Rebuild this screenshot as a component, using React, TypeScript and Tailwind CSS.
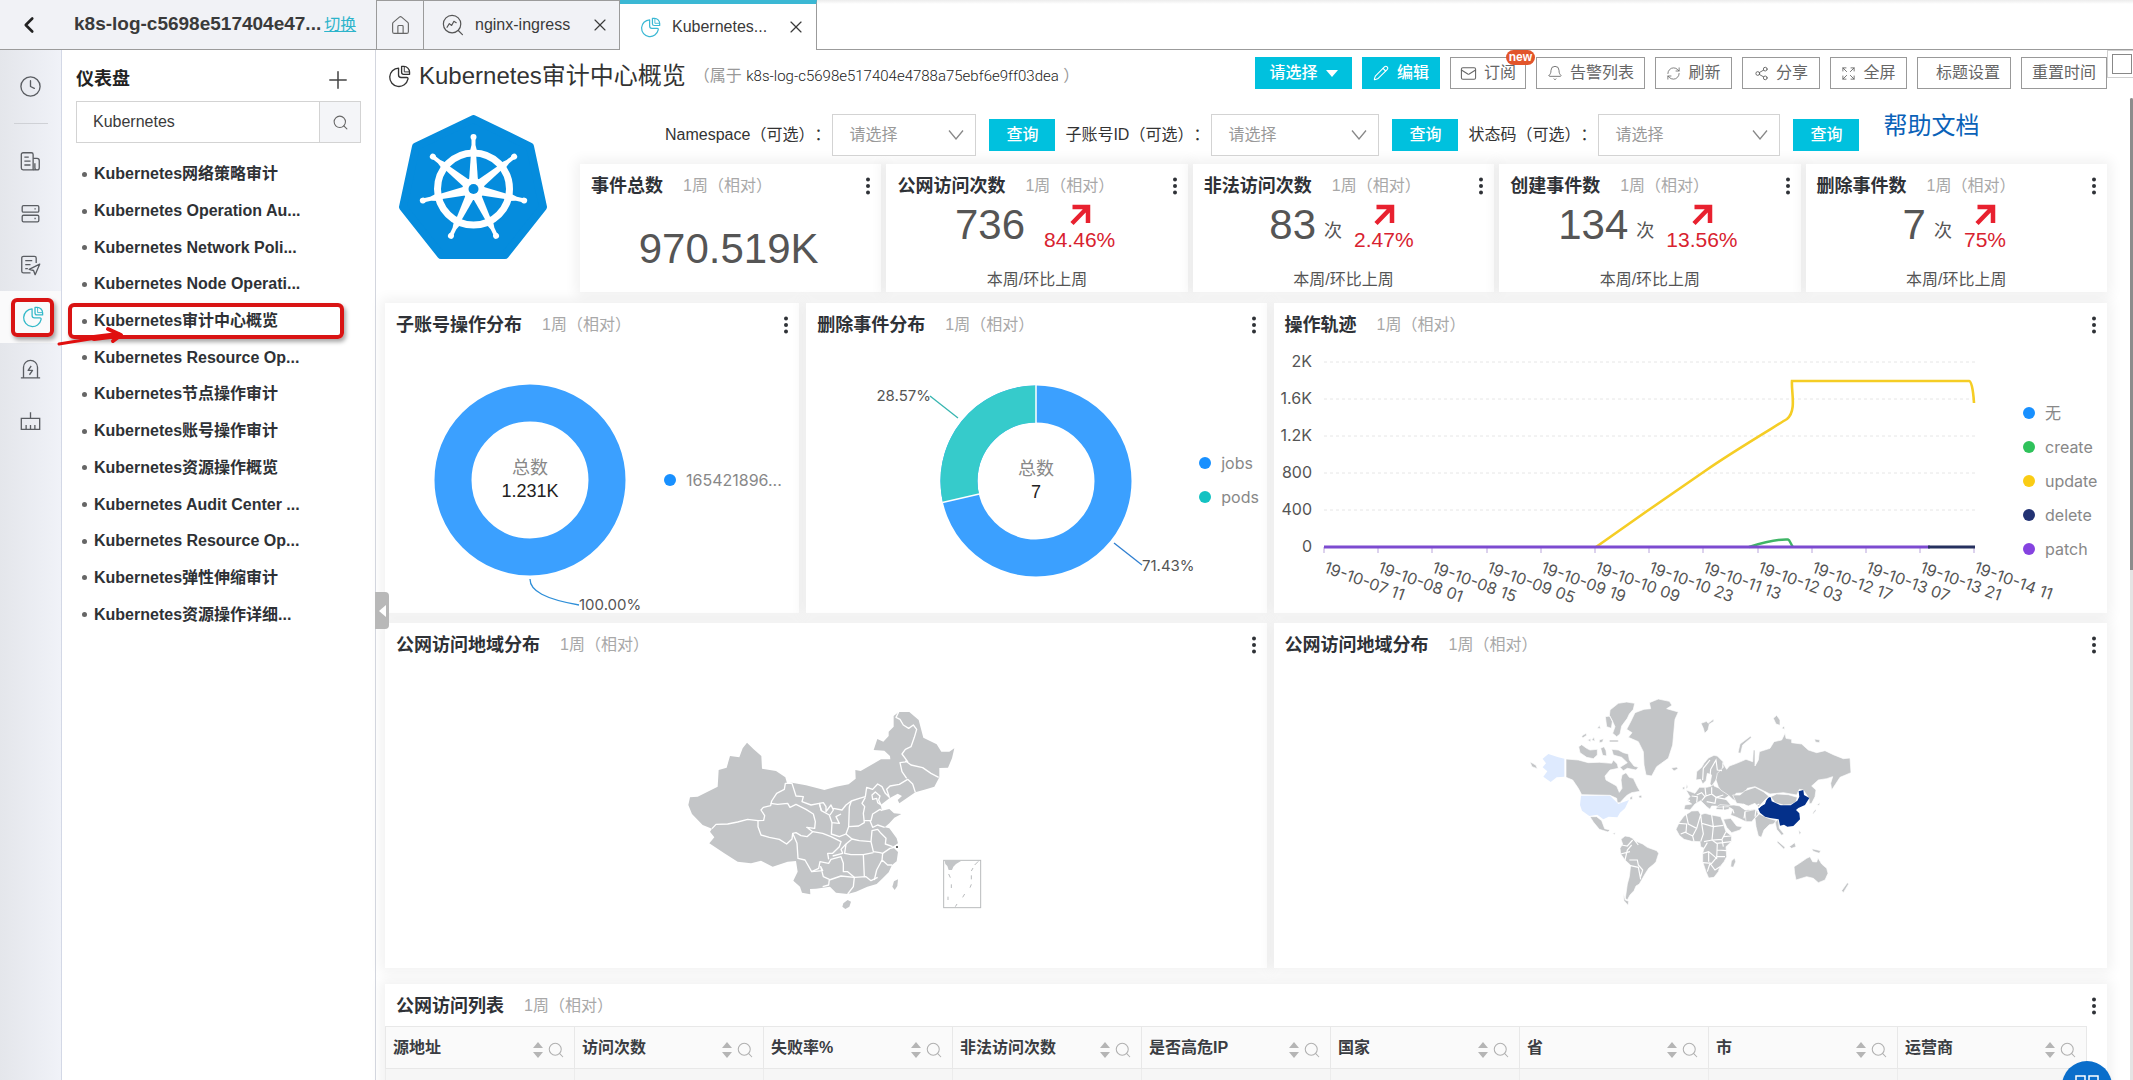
import React from "react";
import { House, Search, Plus, X, Mail, Pencil, Bell, RefreshCw, Share2, Expand, ChevronLeft, Clock } from "lucide-react";

const sans = "font-['Liberation_Sans','Noto_Sans_CJK_SC',sans-serif]";
const chartFont = "font-['Inter','Noto_Sans_CJK_SC',sans-serif]";

type IconProps = { className?: string };

function PieIcon({ className }: IconProps) {
  return (
    <svg viewBox="0 0 24 24" fill="none" stroke="currentColor" strokeWidth="1.4" strokeLinejoin="round" className={className}>
      <path d="M11 3.2a9.6 9.6 0 1 0 9.8 11.6c.3-1.300-.2-1.800-1.200-1.800h-6c-1.600 0-2.600-1-2.600-2.600z" />
      <path d="M14.200 1.500h2.300a6 6 0 0 1 6 6v2.200h-6.200a2.100 2.100 0 0 1-2.100-2.100z" />
      <path d="M17 1.600v5.600h5.400" strokeWidth="1" />
    </svg>
  );
}

function DocsIcon({ className }: IconProps) {
  return (
    <svg viewBox="0 0 24 24" fill="none" stroke="currentColor" strokeWidth="1.500" strokeLinejoin="round" className={className}>
      <path d="M3.500 2h9.500a2 2 0 0 1 2 2v17.500H3.500a2 2 0 0 1-2-2V4a2 2 0 0 1 2-2z" />
      <path d="M15 8.500h4.500a2.500 2.500 0 0 1 2.500 2.500v8a2.500 2.500 0 0 1-5 0v-5M15 21.500h4.500" />
      <path d="M5 7h5M5 11.500h7M5 16h7" />
    </svg>
  );
}

function ServerIcon({ className }: IconProps) {
  return (
    <svg viewBox="0 0 24 24" fill="none" stroke="currentColor" strokeWidth="1.500" className={className}>
      <rect x="2.500" y="3" width="19" height="7.500" rx="1.500" />
      <rect x="2.500" y="14" width="19" height="7.500" rx="1.500" />
      <path d="M16.500 6.700h1.500M16.500 17.700h1.500" />
    </svg>
  );
}

function NoteIcon({ className }: IconProps) {
  return (
    <svg viewBox="0 0 24 24" fill="none" stroke="currentColor" strokeWidth="1.500" strokeLinejoin="round" className={className}>
      <path d="M18.500 9V3.500a2 2 0 0 0-2-2H4a2 2 0 0 0-2 2v15a2 2 0 0 0 2 2h8" />
      <path d="M6 6.500h8M6 11h6M6 15.500h3" />
      <path d="M22.500 10.500l-12 6 5 1.200 1.800 4.800z" />
    </svg>
  );
}

function AlarmIcon({ className }: IconProps) {
  return (
    <svg viewBox="0 0 24 24" fill="none" stroke="currentColor" strokeWidth="1.500" strokeLinejoin="round" className={className}>
      <path d="M1 21.500h22M4 21.500V9.500a8 8 0 0 1 16 0v12" />
      <path d="M12.800 8l-3.500 5h5l-3.500 5" />
    </svg>
  );
}

function BroomIcon({ className }: IconProps) {
  return (
    <svg viewBox="0 0 24 24" fill="none" stroke="currentColor" strokeWidth="1.500" className={className}>
      <path d="M12 1.500v6.500M1.500 8.500h21v12.500h-21z" />
      <path d="M7 21v-5M12 21v-5M17 21v-5" />
    </svg>
  );
}

function TraceIcon({ className }: IconProps) {
  return (
    <svg viewBox="0 0 24 24" fill="none" stroke="currentColor" strokeWidth="1.300" strokeLinecap="round" strokeLinejoin="round" className={className}>
      <circle cx="11" cy="11" r="9.500" />
      <path d="M17.800 18l4.500 4.500M5.500 14.500l2.500-4 2.500 2 2.500-4.500 2.500 1.500" />
    </svg>
  );
}

function Dots({ label }: { label: string }) {
  return (
    <button type="button" aria-label={label} className="ml-auto flex h-6 w-4 items-center justify-center">
      <svg viewBox="0 0 4 18" className="h-[18px] w-1" fill="#2f3237">
        <circle cx="2" cy="2.500" r="2" />
        <circle cx="2" cy="9" r="2" />
        <circle cx="2" cy="15.500" r="2" />
      </svg>
    </button>
  );
}

function Card({ title, children, className = "" }: { title: string; children?: React.ReactNode; className?: string }) {
  return (
    <section className={`flex min-w-0 flex-col bg-white shadow-[0_0_12px_4px_rgba(0,0,0,0.06)] ${className}`}>
      <header className="flex h-10 shrink-0 items-center pt-1 pr-[5px] pl-[11px]">
        <h2 className="text-[18px] leading-6 font-bold whitespace-nowrap text-[#2f3237]">{title}</h2>
        <span className="ml-5 text-[16px] leading-6 whitespace-nowrap text-[#a8a8a8]">1周（相对）</span>
        <Dots label={`${title}菜单`} />
      </header>
      {children}
    </section>
  );
}

function KubernetesLogo() {
  const angles = [0, 1, 2, 3, 4, 5, 6].map((i) => (i * 360) / 7);
  return (
    <svg viewBox="0 0 148 144" className="ml-[14px] mt-[3px] h-[144px] w-[148px]" role="img" aria-label="Kubernetes">
      <path
        d="M74.500 4L131 31.500L144 92L106 140H42L4 92L17 31.500Z"
        fill="#058cdd"
        stroke="#058cdd"
        strokeWidth="8"
        strokeLinejoin="round"
      />
      <circle cx="74.500" cy="74" r="36" fill="none" stroke="#fff" strokeWidth="7" />
      {angles.map((a) => (
        <g key={a} transform={`rotate(${a} 74.500 74)`} fill="#fff">
          <path d="M70 66L72 38H77L79 66Z" />
          <path d="M70.500 38L72.500 30V21H76.500V30L78.500 38Z" />
          <circle cx="74.500" cy="22" r="3" />
        </g>
      ))}
      <circle cx="74.500" cy="74" r="11" fill="#fff" />
      <circle cx="74.500" cy="74" r="5" fill="#058cdd" />
    </svg>
  );
}

const railItems = [
  { name: "日志库", Icon: DocsIcon },
  { name: "存储", Icon: ServerIcon },
  { name: "任务", Icon: NoteIcon },
  { name: "仪表盘", Icon: PieIcon },
  { name: "告警", Icon: AlarmIcon },
  { name: "清洗", Icon: BroomIcon },
];

function Rail() {
  return (
    <nav aria-label="导航" className="flex w-[62px] shrink-0 flex-col items-center border-r border-[#d3d8e6] bg-linear-to-r from-[#e4e6eb] to-[#f0f2f8] pt-[10px] text-[#5a5d62]">
      <a href="#recent" aria-label="最近访问" className="flex h-[52px] w-full items-center justify-center">
        <Clock className="size-[23px]" strokeWidth={1.4} />
      </a>
      <hr className="my-[11px] w-[34px] border-[#cfd1d6]" />
      {railItems.map(({ name, Icon }) =>
        name === "仪表盘" ? (
          <a key={name} href="#dashboards" aria-label={name} aria-current="page" className="flex h-[52px] w-full items-center justify-center bg-[#fafafb] pl-1 text-[#34b9c9]">
            <span className="flex h-[39px] w-[43px] items-center justify-center rounded-md border-4 border-[#d91414] shadow-[2px_3px_4px_rgba(0,0,0,0.35)]">
              <Icon className="size-[22px]" />
            </span>
          </a>
        ) : (
          <a key={name} href={`#${name}`} aria-label={name} className="flex h-[52px] w-full items-center justify-center">
            <Icon className="size-[21px]" />
          </a>
        ),
      )}
    </nav>
  );
}

const dashboards = [
  "Kubernetes网络策略审计",
  "Kubernetes Operation Au...",
  "Kubernetes Network Poli...",
  "Kubernetes Node Operati...",
  "Kubernetes审计中心概览",
  "Kubernetes Resource Op...",
  "Kubernetes节点操作审计",
  "Kubernetes账号操作审计",
  "Kubernetes资源操作概览",
  "Kubernetes Audit Center ...",
  "Kubernetes Resource Op...",
  "Kubernetes弹性伸缩审计",
  "Kubernetes资源操作详细...",
];

function Sidebar() {
  return (
    <aside className="flex min-w-0 flex-1 flex-col">
      <div className="flex h-[51px] items-center pt-2 pr-[23px] pl-[14px]">
        <h2 className="text-[18px] font-bold text-[#222]">仪表盘</h2>
        <button type="button" aria-label="新建仪表盘" className="ml-auto">
          <Plus className="size-7 text-[#444]" strokeWidth={1.300} />
        </button>
      </div>
      <form className="mr-[14px] ml-[14px] flex h-[42px] border border-[#d3d3d3]">
        <input type="text" aria-label="搜索仪表盘" defaultValue="Kubernetes" className="min-w-0 flex-1 px-4 text-[16px] text-[#3a3a3a] outline-none" />
        <button type="button" aria-label="搜索" className="flex w-[41px] items-center justify-center border-l border-[#d3d3d3] bg-[#f4f5f8]">
          <Search className="size-[17px] text-[#666]" strokeWidth={1.500} />
        </button>
      </form>
      <ul className="mt-[13px] flex h-[477px] flex-col pl-[6px]">
        {dashboards.map((name, i) => (
          <li key={i} className="relative mr-[31px] flex flex-1 items-center pl-[14px]">
            <span className="mr-[7px] size-[5px] rounded-full bg-[#666]" />
            <a href={`#dashboard-${i}`} className="text-[16px] leading-5 font-bold whitespace-nowrap text-[#2e3135]">
              {name}
            </a>
            {i === 4 && (
              <>
                <span className="absolute inset-0 rounded-md border-4 border-[#d91414] shadow-[2px_3px_4px_rgba(0,0,0,0.35)]" />
                <svg viewBox="0 0 70 24" className="absolute top-[21px] -left-[12px] h-6 w-[70px]" fill="none" stroke="#e00f0f" strokeLinecap="round" strokeLinejoin="round">
                  <path d="M3 20L40 14" strokeWidth="3" />
                  <path d="M38 14L62 11" strokeWidth="6" />
                  <path d="M52 5L65 11L57 17" strokeWidth="4" />
                </svg>
              </>
            )}
          </li>
        ))}
      </ul>
    </aside>
  );
}

function TopBar() {
  return (
    <div className="flex h-[50px] shrink-0">
      <div className="flex w-[376px] shrink-0 items-center border-b border-[#9b9b9b] bg-[#f1f2f6] pl-4">
        <button type="button" aria-label="返回" className="mr-8">
          <ChevronLeft className="size-[26px] text-[#222]" strokeWidth={2.400} />
        </button>
        <strong className="text-[19px] whitespace-nowrap text-[#3a3a3a]">k8s-log-c5698e517404e47...</strong>
        <a href="#switch" className="ml-[3px] text-[16px] whitespace-nowrap text-[#2db4cb] underline">切换</a>
      </div>
      <nav aria-label="标签页" className="flex flex-1 text-[16px] text-[#3a3a3a]">
        <a href="#home" aria-label="主页" className="flex w-12 items-center justify-center border border-[#9b9b9b] bg-[#f1f2f6]">
          <House className="size-[21px] text-[#666]" strokeWidth={1.300} />
        </a>
        <div className="flex w-[196px] items-center border-y border-r border-[#9b9b9b] bg-[#f1f2f6] pl-[18px]">
          <TraceIcon className="mr-[11px] size-[22px] text-[#555]" />
          <a href="#nginx">nginx-ingress</a>
          <button type="button" aria-label="关闭 nginx-ingress" className="ml-auto mr-[9px]">
            <X className="size-5" strokeWidth={1.400} />
          </button>
        </div>
        <div className="flex w-[197px] items-center border-t-4 border-r border-t-[#3bb8d4] border-r-[#9b9b9b] bg-white pl-5">
          <PieIcon className="mr-[11px] size-[21px] text-[#3bb8d4]" />
          <a href="#kubernetes">Kubernetes...</a>
          <button type="button" aria-label="关闭 Kubernetes" className="ml-auto mr-[10px]">
            <X className="size-5" strokeWidth={1.400} />
          </button>
        </div>
        <div className="flex-1 border-b border-[#9b9b9b] bg-linear-to-b from-[#ececec] to-white to-[4px]" />
      </nav>
    </div>
  );
}

const ghost = "relative flex h-8 items-center justify-center gap-[7px] border border-[#999] bg-white text-[#666] whitespace-nowrap";
const primary = "flex h-8 items-center justify-center gap-2 bg-[#00c1de] font-medium text-white whitespace-nowrap";

function Toolbar() {
  return (
    <div className="flex h-[62px] shrink-0 items-start pt-[7px] pl-3">
      <PieIcon className="mt-[8px] size-[23px] shrink-0 text-[#333]" />
      <h1 className="mt-px ml-2 text-[24px] leading-9 whitespace-nowrap text-[#333]">Kubernetes审计中心概览</h1>
      <p className="mt-[7px] ml-2 text-[16px] leading-6 whitespace-nowrap text-[#999]">
        （属于 <span className="font-['Roboto'] text-[15px] font-light text-[#222]">k8s-log-c5698e517404e4788a75ebf6e9ff03dea</span> ）
      </p>
      <div className="ml-auto flex shrink-0 gap-[10px] text-[16px] leading-5">
        <button type="button" className={`${primary} w-[97px]`}>
          请选择
          <span className="border-x-[6px] border-t-[7px] border-x-transparent border-t-white" />
        </button>
        <button type="button" className={`${primary} w-[78px]`}>
          <Pencil className="size-4" strokeWidth={1.600} />
          编辑
        </button>
        <button type="button" className={`${ghost} w-[76px]`}>
          <Mail className="size-[17px]" strokeWidth={1.500} />
          订阅
          <span className="absolute -top-2 -right-[10px] rounded-lg bg-[#e2552b] px-[3px] text-[12px] leading-[15px] font-bold text-white">new</span>
        </button>
        <button type="button" className={`${ghost} w-[109px]`}>
          <Bell className="size-4" strokeWidth={1.300} />
          告警列表
        </button>
        <button type="button" className={`${ghost} w-[77px]`}>
          <RefreshCw className="size-[15px]" strokeWidth={1.300} />
          刷新
        </button>
        <button type="button" className={`${ghost} w-[78px]`}>
          <Share2 className="size-[15px]" strokeWidth={1.500} />
          分享
        </button>
        <button type="button" className={`${ghost} w-[77px]`}>
          <Expand className="size-[15px]" strokeWidth={1.400} />
          全屏
        </button>
        <button type="button" className={`${ghost} w-[94px] pl-2`}>标题设置</button>
        <button type="button" className={`${ghost} w-[86px]`}>重置时间</button>
      </div>
      <div className="-mt-[7px] flex h-7 w-[26px] shrink-0 items-center border border-r-0 border-[#d0d0d0] bg-white pl-1">
        <input type="checkbox" aria-label="固定工具栏" className="h-5 w-5 shrink-0 appearance-none border border-[#888] bg-white" />
      </div>
    </div>
  );
}

function Filter({ id, label, width }: { id: string; label: string; width: string }) {
  return (
    <div className="flex shrink-0 items-center">
      <label htmlFor={id} className="mr-[2px] whitespace-nowrap text-[#333] [text-spacing-trim:space-all]">{label}</label>
      <div className={`relative ${width}`}>
        <select id={id} defaultValue="" className="h-[42px] w-full appearance-none border border-[#d3d3d3] bg-white pl-4 text-[16px] text-[#999]">
          <option value="">请选择</option>
        </select>
        <svg viewBox="0 0 16 10" className="pointer-events-none absolute top-4 right-3 h-[10px] w-4" fill="none" stroke="#888" strokeWidth="1.300">
          <path d="M1 0.500L8 9L15 0.500" />
        </svg>
      </div>
      <button type="button" className="ml-[13px] h-8 w-[66px] bg-[#00c1de] font-medium text-white">查询</button>
    </div>
  );
}

function Arrow() {
  return (
    <svg viewBox="0 0 22 22" className="h-[22px] w-[22px]" fill="none" stroke="#e8212f" strokeWidth="4.500">
      <path d="M3.500 3H19V19M19 3L3 19.500" />
    </svg>
  );
}

const stats = [
  { title: "公网访问次数", value: "736", unit: "", change: "84.46%" },
  { title: "非法访问次数", value: "83", unit: "次", change: "2.47%" },
  { title: "创建事件数", value: "134", unit: "次", change: "13.56%" },
  { title: "删除事件数", value: "7", unit: "次", change: "75%" },
];

function Stats() {
  return (
    <div className="grid grid-cols-5 gap-[5px]">
      <Card title="事件总数" className="h-32">
        <p className="mt-5 pr-1 text-center text-[42px] leading-[50px] text-[#555]">970.519K</p>
      </Card>
      {stats.map((s) => (
        <Card key={s.title} title={s.title} className="h-32">
          <div className="flex h-[52px] items-start justify-center pr-1">
            <span className="text-[42px] leading-[42px] text-[#555]">{s.value}</span>
            {s.unit && <span className="mt-[15px] ml-2 text-[18px] leading-6 text-[#555]">{s.unit}</span>}
            <div className={`flex flex-col items-center ${s.unit ? "ml-3" : "ml-[19px]"}`}>
              <Arrow />
              <span className="mt-[2px] text-[21px] leading-6 text-[#d8222f]">{s.change}</span>
            </div>
          </div>
          <p className="mt-[13px] text-center text-[16px] leading-6 text-[#555]">本周/环比上周</p>
        </Card>
      ))}
    </div>
  );
}

function Legend({ items, className = "" }: { items: { name: string; color: string }[]; className?: string }) {
  return (
    <ul className={`flex flex-col text-[16px] leading-6 text-[#888] ${chartFont} ${className}`}>
      {items.map((it) => (
        <li key={it.name} className="flex h-[34px] items-center whitespace-nowrap">
          <span className="mr-[10px] size-3 shrink-0 rounded-full" style={{ backgroundColor: it.color }} />
          {it.name}
        </li>
      ))}
    </ul>
  );
}

function AccountDonut() {
  return (
    <div className="flex flex-1 items-start">
      <svg viewBox="0 0 279 270" className={`h-[270px] w-[279px] shrink-0 overflow-visible ${chartFont}`} role="img" aria-label="子账号操作分布">
        <circle cx="145" cy="137" r="77" fill="none" stroke="#3ba0ff" strokeWidth="37" />
        <text x="145" y="131" textAnchor="middle" fontSize="18" fill="#888">总数</text>
        <text x="145" y="154" textAnchor="middle" fontSize="18" fill="#222" className={sans}>1.231K</text>
        <path d="M145 236C145 248 160 256 194 262" fill="none" stroke="#2f8fd8" strokeWidth="1.300" />
        <text x="194" y="267" fontSize="15" fill="#555">100.00%</text>
      </svg>
      <Legend className="mt-[120px]" items={[{ name: "165421896...", color: "#1890ff" }]} />
    </div>
  );
}

function DeleteDonut() {
  return (
    <div className="flex flex-1 items-start">
      <svg viewBox="0 0 393 270" className={`h-[270px] w-[393px] shrink-0 overflow-visible ${chartFont}`} role="img" aria-label="删除事件分布">
        <circle cx="230" cy="138" r="77" fill="none" stroke="#3ba0ff" strokeWidth="37" />
        <path d="M230 61A77 77 0 0 0 154.900 155.200" fill="none" stroke="#36cbcb" strokeWidth="37" />
        <path d="M230 41V81M136.400 159.400L174.400 150.700" stroke="#fff" strokeWidth="1.500" />
        <text x="230" y="132" textAnchor="middle" fontSize="18" fill="#888">总数</text>
        <text x="230" y="155" textAnchor="middle" fontSize="18" fill="#222" className={sans}>7</text>
        <path d="M124 53L152 75" stroke="#36b5b0" strokeWidth="1.300" />
        <path d="M308 200L336 222" stroke="#2f7fd0" strokeWidth="1.300" />
        <text x="125" y="58" textAnchor="end" fontSize="15" fill="#555">28.57%</text>
        <text x="336" y="228" fontSize="15" fill="#555">71.43%</text>
      </svg>
      <Legend className="mt-[103px]" items={[{ name: "jobs", color: "#1890ff" }, { name: "pods", color: "#13c2c2" }]} />
    </div>
  );
}

const xLabels = ["19-10-07 11", "19-10-08 01", "19-10-08 15", "19-10-09 05", "19-10-09 19", "19-10-10 09", "19-10-10 23", "19-10-11 13", "19-10-12 03", "19-10-12 17", "19-10-13 07", "19-10-13 21", "19-10-14 11"];
const yLabels = ["2K", "1.6K", "1.2K", "800", "400", "0"];

function TraceChart() {
  return (
    <div className="flex flex-1 items-start justify-between pr-px">
      <svg viewBox="0 0 742 270" className={`h-[270px] w-[742px] min-w-0 overflow-visible ${chartFont}`} fill="none" role="img" aria-label="操作轨迹">
        {yLabels.map((l, i) => (
          <g key={l}>
            <text x="38" y={24 + i * 37} textAnchor="end" fontSize="16" fill="#555">{l}</text>
            {i < 5 && <path d={`M50 ${19 + i * 37}H701`} stroke="#e6e6e6" strokeDasharray="3 3" />}
          </g>
        ))}
        {xLabels.map((l, i) => {
          const x = 50 + Math.round(i * 54.200);
          return (
            <g key={l}>
              <path d={`M${x} 204V210`} stroke="#b9a5dc" />
              <text transform={`translate(${x - 1} 229) rotate(20)`} fontSize="16" fill="#555">{l}</text>
            </g>
          );
        })}
        <path d="M322 204L376 166L431 128C455 111 497 86 513 76C523 68 517 48 518 38H695C697 38 699 44 700 60" stroke="#f5cd25" strokeWidth="2.600" />
        <path d="M475 204C490 199 502 196 514 196.500C516 197 517 202 519 204" stroke="#3fb566" strokeWidth="2.400" />
        <path d="M50 204H656" stroke="#7c4bd0" strokeWidth="3" />
        <path d="M654 204H701" stroke="#26315f" strokeWidth="3" />
      </svg>
      <Legend
        className="mt-[53px] w-[83px] shrink-0"
        items={[
          { name: "无", color: "#1890ff" },
          { name: "create", color: "#2fc25b" },
          { name: "update", color: "#facc14" },
          { name: "delete", color: "#223273" },
          { name: "patch", color: "#8543e0" },
        ]}
      />
    </div>
  );
}

function ChinaMap() {
  return (
    <svg viewBox="-40 0 1080 750" className="mx-auto mt-[27px] h-[250px] w-[360px]" role="img" aria-label="中国地图">
      <g fill="#c3c5c7">
        <path d="M263 158L283 178L306 198L308 236L350 243L378 262L383 280L398 278L440 286L495 300L530 290L568 283L589 266L588 240L604 243L665 208L693 208L692 198L675 182L643 180L654 147L672 155L688 138L688 125L703 110L703 78L718 66L750 66L778 90L792 143L832 163L846 185L870 185L885 175L878 205L866 233L840 234L840 262L825 290L800 298L768 307L720 340L715 330L728 318L715 311L690 325L664 345L668 362L690 357L704 370L726 372L705 383L690 400L676 412L690 415L712 445L716 460L700 470L716 486L712 514L698 525L688 547L670 565L652 582L624 590L590 605L565 612L530 608L512 590L470 596L452 597L453 613L428 608L422 590L402 572L415 545L410 513L385 515L340 530L305 512L275 520L235 515L195 490L150 460L165 442L152 425L158 416L130 405L98 372L87 345L92 322L115 320L175 290L178 240L202 233L212 198L240 202L250 175Z" />
        <path d="M552 640L565 630L575 635L570 650L558 657L549 650Z" />
        <path d="M716 568L714 588L706 600L699 590L704 574Z" />
        <path d="M856 513H905L890 522L882 530L878 540L868 540L864 528L858 522Z" />
      </g>
      <g fill="none" stroke="#fff" strokeWidth="4" strokeLinejoin="round">
        <path d="M158 416L170 403L205 402L235 396L265 388L296 392L313 391L316 377L305 360L312 352L334 347L337 333L352 310L375 298L378 280L398 280L410 318L432 320L428 335L455 345L480 340L486 362L510 375L518 398L540 400L530 380L545 372" />
        <path d="M334 340L355 343L385 340L392 352L410 343L440 358L462 372L468 395L466 415L442 412L460 425L443 440L425 437L410 428L400 430L398 447L382 462L360 448L330 442L305 435L296 410V392" />
        <path d="M400 430L413 460L416 505L437 510L457 545L478 535L482 515L508 520L515 508L545 500L552 520L552 545L565 545L585 562L620 560L635 572L655 562" />
        <path d="M460 425L490 430L515 440L545 455L540 470L520 490L505 490L508 508M518 398L516 432L540 440L560 432L578 447L560 462L545 478L550 490L520 498" />
        <path d="M486 362L480 340L492 338L500 350V365L515 345L522 360L512 375M522 355L548 360L560 345L576 333L600 325L618 320L622 292L640 298L655 282L668 290L678 310L690 322L682 298L692 288L720 283L745 268L760 282L768 307" />
        <path d="M576 333L570 350L568 410L560 432M568 410L598 408L615 398L612 370L616 350L608 340L618 322M612 392L635 392L640 372L662 358L668 362M632 392L640 412L655 405L676 412" />
        <path d="M578 447L600 452L635 455L642 485L662 488L670 490L692 475L716 470M560 462L556 490L575 494L612 494L615 560M612 494L642 488M635 455L638 422L655 418L665 430L680 445L678 462L700 470" />
        <path d="M670 490L668 510L685 525L698 525M668 510L652 540L645 570M457 545L490 542L484 530L492 560L510 568L508 585L490 590M510 570L545 558L585 562L582 590L565 612" />
        <path d="M718 66L710 82L722 88L732 105L748 115L762 105L772 118L765 142L755 170L738 178L728 192L745 215L722 218L728 245L742 265M738 212L755 225L790 233L815 250L838 262" />
        <path d="M638 315L648 306L662 318L658 330L665 345L655 338L652 325L640 328Z" />
      </g>
      <circle cx="713" cy="471" r="3" fill="#333" />
      <g fill="none" stroke="#b9bbbd" strokeWidth="3">
        <rect x="853" y="511" width="111" height="142" />
        <path d="M868 552L873 563M876 583V594M866 620V630M888 650L893 642M910 622L916 612M932 593L936 583M936 568V556M936 543L941 534M946 525L957 514" />
      </g>
    </svg>
  );
}

function WorldMap() {
  return (
    <svg viewBox="0 0 1080 750" className="mx-auto mt-[17px] h-[250px] w-[360px]" role="img" aria-label="世界地图">
      <g fill="#c3c5c7" stroke="#fff" strokeWidth="2" strokeLinejoin="round">
        <path d="M168 237L205 240L235 248L268 247L305 250L310 240L322 252L325 265L300 270L285 288L288 300L320 318L328 337L336 325L333 300L336 285L348 278L358 292L370 295L382 320L390 334L365 338L352 345L342 355L330 368L322 368L320 355L300 346L215 344L205 325L188 300L168 292Z" />
        <path d="M300 90L325 70L350 66L374 70L370 88L358 102L352 115L335 138L330 162L320 170L308 160L315 140L306 120L298 108ZM286 110L300 108L307 125L304 145L290 140ZM206 200L215 194L230 205L240 210L262 208L262 225L250 236L230 232L210 218ZM298 180L325 180V186L298 186ZM305 208L325 210L340 218L355 222L358 240L372 258L385 262L378 270L352 265L340 272L330 262L352 248L335 232L310 225ZM215 168L228 160L230 166L218 174ZM232 180L242 176V185ZM245 180L252 172L255 184ZM262 145L268 136L272 146ZM268 180L280 176L278 186L268 188ZM272 205L282 200L288 212L290 228L278 226Z" />
        <path d="M350 148L362 125L375 98L402 88L422 86L418 68L445 57L478 64L486 76L470 86L505 96L495 118L492 150L488 195L475 235L440 260L425 288L408 285L402 255L400 215L385 185L355 172L366 158Z" />
        <path d="M484 264L500 261L504 266L492 273ZM60 245L78 256L82 266L66 260ZM386 348L394 345L396 353L388 354ZM360 352L367 349V358L360 359Z" />
        <path d="M240 410L260 410L275 422L284 446L300 450L294 456L268 448L250 426Z" />
        <path d="M333 478L345 468L358 470L370 476L378 484L398 492L412 502L440 512L446 520L438 545L432 552L416 565L405 582L396 598L388 612L378 618L372 632L360 645L352 660L346 655L352 612L358 590L362 556L345 540L332 522L330 505L338 492ZM340 640L346 660L356 664L354 676L342 662ZM308 460L316 458L314 464Z" />
        <path d="M508 427L522 408L545 393L565 392L572 404L585 400L605 405L632 410L638 425L648 455L665 468L664 485L648 500L650 530L642 545L630 560L625 575L612 592L596 594L588 575L578 545V520L582 505L572 500L570 485L545 484L522 478L508 466L498 448Z" />
        <path d="M662 560L664 543L674 534L677 545L670 562Z" />
        <path d="M528 330L535 342L540 350L530 360L545 372L525 375L522 388L540 390L555 372L572 362L582 372L590 380L600 388L605 378L620 378L618 388L645 390L655 388L665 378L655 366L645 355L660 345L655 335L640 332L628 325L612 318L610 310L605 318L590 322L568 322L555 340ZM530 312L534 322L528 326ZM518 322L524 320V328H518Z" />
        <path d="M558 300L560 275L575 262L582 250L595 234L612 226L622 228L640 246L636 270L625 280L618 300L605 318L600 312L605 285L592 280L588 302L578 312L572 298Z" />
        <path d="M618 300L622 280L640 262L638 248L650 268L658 258L680 250L708 238L728 245L730 210H735V258L745 240L748 215L780 205L792 185L815 180L825 160L828 175L845 178L845 188L875 192L895 210L920 218L945 212L970 224L1000 236L1020 234L1023 278L990 292L975 315L965 330L962 310L968 290L950 296L925 300L905 318L918 330L915 350L905 370L898 372L897 355L880 330L868 328L860 345L820 338L780 342L735 320L712 325L705 338L678 340L672 350L680 365L668 358L655 345L632 330L625 320Z" />
        <path d="M684 218L690 192L722 168L724 173L698 195L692 220ZM573 130L590 124L594 130L610 118L612 124L598 132L594 150L584 160L580 145ZM790 115L800 106L810 120V136L798 132ZM815 145L822 138L824 148ZM914 177L930 180L928 188L916 186Z" />
        <path d="M668 345L690 345L705 332L735 322L760 335L778 350L765 360L745 382L735 370L715 378L698 372L680 370Z" />
        <path d="M782 350L800 342L835 344L862 352L858 366L842 374L820 375L795 368Z" />
        <path d="M640 418L662 415L680 438L697 440L690 450L665 458L650 442Z" />
        <path d="M618 382L655 380L668 388L662 405L680 412L708 425L715 410L735 408L745 395L735 388L705 390L690 378L672 375L655 376L630 374Z" />
        <path d="M705 395L738 388L745 402L725 425L708 425ZM735 415L748 402L775 415L800 422L790 432L778 434L762 450L754 472L745 468L738 440ZM795 425L805 418L808 445L822 462L815 466L800 448ZM802 482L825 502L822 508L802 488ZM838 500L854 488L858 500L845 505ZM866 450L873 458L868 464ZM905 506L932 512L928 520L910 514Z" />
        <path d="M852 560L868 550L890 535L900 530L908 545L920 546L924 534L935 552L950 565L954 580L945 600L925 608L910 595L890 590L858 600L854 580Z" />
        <path d="M995 632L1012 608L1016 612L1000 638ZM908 400L916 388L918 392L910 402ZM920 375L930 368L928 376Z" />
      </g>
      <path d="M98 236L115 222L145 232L163 236V290L140 292L122 306L100 290L112 274L98 262L108 250ZM213 347L300 347L325 372L357 360L345 385L330 398L322 412L296 410L280 418L262 404L238 408L216 392L210 375Z" fill="#deeafe" />
      <path d="M744 385L765 372L772 352L782 352L785 364L812 376L842 376L862 362L868 350L866 334L880 330L882 345L898 354L885 375L865 384L858 390L868 400L870 418L850 438L832 440L822 434L810 437L806 418L780 414L765 410L750 398Z" fill="#04308a" />
      <g fill="none" stroke="#fff" strokeWidth="3.500">
        <path d="M335 495L352 498L368 480M345 540L352 510L365 495M358 540L382 540L385 555L398 570L392 590M358 556L385 562L392 598M370 476L385 495M332 522L360 515" />
        <path d="M528 400L535 432L560 445L572 404M505 430L530 432L528 458L548 468L560 445M572 404L575 430L610 440L605 405M610 440L640 436M610 440L606 480L636 478L648 455M575 430L580 462L572 485M548 468L552 484M582 485L606 480L620 490L664 485M582 505L592 488M578 520L596 515L620 535L622 490M578 548L605 550L622 530L645 530M592 575L600 550L615 570L630 560M596 515L596 545M620 510L650 512M636 478L640 500M530 455L512 462M640 470L665 468" />
        <path d="M560 345L575 338L585 350L575 362M585 322L588 348L605 342L618 352L640 345M605 322L605 342M618 352L615 370L590 365M545 348L562 350L560 368M578 300L580 265L600 240M600 290L602 268L618 240L622 270L636 272M618 352L650 358M640 390L640 378M690 378L710 390M668 388L672 400M705 395L702 415M738 388L735 410M748 372L720 388L700 372M776 350L745 385M540 362L528 358" />
      </g>
    </svg>
  );
}

function SortIcon() {
  return (
    <svg viewBox="0 0 10 16" className="h-4 w-[10px]" fill="#b5b5b5">
      <path d="M5 0L10 6H0ZM5 16L0 10H10Z" />
    </svg>
  );
}

const columns = ["源地址", "访问次数", "失败率%", "非法访问次数", "是否高危IP", "国家", "省", "市", "运营商"];

function AccessTable() {
  return (
    <div className="pt-[2px] pr-[20px]">
      <table className="w-full table-fixed border-collapse border border-[#e8e8e8]">
        <thead>
          <tr className="h-[42px] bg-[#fafafa]">
            {columns.map((c) => (
              <th key={c} scope="col" className="border border-[#e8e8e8] pr-[9px] pl-[7px] text-left text-[16px] font-bold text-[#3a3d42]">
                <div className="flex items-center">
                  {c}
                  <button type="button" aria-label={`${c}排序`} className="mt-1 ml-auto">
                    <SortIcon />
                  </button>
                  <button type="button" aria-label={`${c}筛选`} className="mt-1 ml-1">
                    <Search className="size-[18px] text-[#b0b0b0]" strokeWidth={1.400} />
                  </button>
                </div>
              </th>
            ))}
          </tr>
        </thead>
        <tbody>
          <tr className="h-10 bg-[#f6f6f6]">
            {columns.map((c) => (
              <td key={c} className="border border-[#ececec]" />
            ))}
          </tr>
        </tbody>
      </table>
    </div>
  );
}

export default function App() {
  return (
    <div className={`relative flex h-screen flex-col overflow-hidden bg-white text-[#333] ${sans}`}>
      <TopBar />
      <div className="flex min-h-0 flex-1">
        <div className="relative flex w-[376px] shrink-0 border-r border-[#d3d6de]">
          <Rail />
          <Sidebar />
          <button type="button" aria-label="收起侧栏" className="absolute top-[542px] -right-[14px] z-10 flex h-[37px] w-[14px] items-center justify-center rounded-r bg-[#b8b8b8]">
            <span className="border-y-[6px] border-r-[7px] border-y-transparent border-r-white" />
          </button>
        </div>
        <main className="flex min-w-0 flex-1 flex-col">
          <Toolbar />
          <div className="flex min-h-0 flex-1">
            <div className="flex min-w-0 flex-1 flex-col pr-[23px] pl-[9px]">
              <div className="grid shrink-0 grid-cols-[195px_1fr]">
                <KubernetesLogo />
                <div className="min-w-0">
                  <div className="flex h-[52px] items-start gap-[10px] pt-[2px] pl-[85px] text-[16px]">
                    <Filter id="namespace" label="Namespace（可选）：" width="w-[144px]" />
                    <Filter id="account" label="子账号ID（可选）：" width="w-[168px]" />
                    <Filter id="status" label="状态码（可选）：" width="w-[182px]" />
                    <a href="#help" className="ml-[14px] text-[24px] leading-6 whitespace-nowrap text-[#0a62b8]">帮助文档</a>
                  </div>
                  <Stats />
                </div>
              </div>
              <div className="mt-[11px] grid shrink-0 grid-cols-[414fr_460fr_833fr] gap-[7px]">
                <Card title="子账号操作分布" className="h-[310px]"><AccountDonut /></Card>
                <Card title="删除事件分布" className="h-[310px]"><DeleteDonut /></Card>
                <Card title="操作轨迹" className="h-[310px]"><TraceChart /></Card>
              </div>
              <div className="mt-[10px] grid shrink-0 grid-cols-[881fr_833fr] gap-[7px]">
                <Card title="公网访问地域分布" className="h-[345px]"><ChinaMap /></Card>
                <Card title="公网访问地域分布" className="h-[345px]"><WorldMap /></Card>
              </div>
              <Card title="公网访问列表" className="mt-4 shrink-0"><AccessTable /></Card>
            </div>
            <div className="-mt-[14px] w-[3px] bg-[#e4e4e4]">
              <div className="h-[472px] rounded-t bg-[#8c8c8c]" />
            </div>
          </div>
        </main>
      </div>
      <button type="button" aria-label="更多应用" className="absolute -bottom-[31px] right-[21px] flex size-[50px] justify-center rounded-full bg-[#0a6ecb] pt-[14px] shadow-md">
        <svg viewBox="0 0 24 24" className="size-6" fill="none" stroke="#fff" strokeWidth="1.500">
          <path d="M1 1h9v9H1zM14 1h9v9h-9zM1 14h9v9H1zM14 14h9v9h-9z" />
        </svg>
      </button>
    </div>
  );
}
